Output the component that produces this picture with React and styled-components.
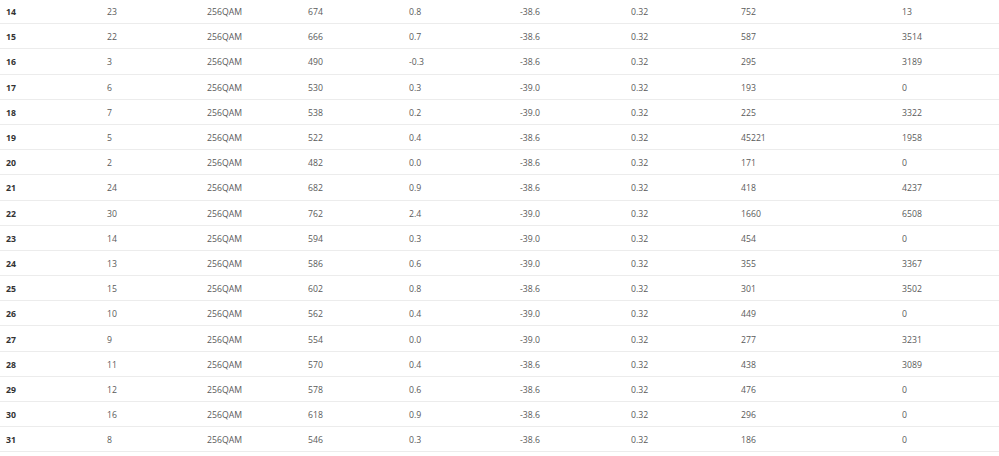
import styled, { createGlobalStyle } from "styled-components";

const rows = [
  [14, 23, "256QAM", 674, "0.8", "-38.6", "0.32", 752, 13],
  [15, 22, "256QAM", 666, "0.7", "-38.6", "0.32", 587, 3514],
  [16, 3, "256QAM", 490, "-0.3", "-38.6", "0.32", 295, 3189],
  [17, 6, "256QAM", 530, "0.3", "-39.0", "0.32", 193, 0],
  [18, 7, "256QAM", 538, "0.2", "-39.0", "0.32", 225, 3322],
  [19, 5, "256QAM", 522, "0.4", "-38.6", "0.32", 45221, 1958],
  [20, 2, "256QAM", 482, "0.0", "-38.6", "0.32", 171, 0],
  [21, 24, "256QAM", 682, "0.9", "-38.6", "0.32", 418, 4237],
  [22, 30, "256QAM", 762, "2.4", "-39.0", "0.32", 1660, 6508],
  [23, 14, "256QAM", 594, "0.3", "-39.0", "0.32", 454, 0],
  [24, 13, "256QAM", 586, "0.6", "-39.0", "0.32", 355, 3367],
  [25, 15, "256QAM", 602, "0.8", "-38.6", "0.32", 301, 3502],
  [26, 10, "256QAM", 562, "0.4", "-39.0", "0.32", 449, 0],
  [27, 9, "256QAM", 554, "0.0", "-39.0", "0.32", 277, 3231],
  [28, 11, "256QAM", 570, "0.4", "-38.6", "0.32", 438, 3089],
  [29, 12, "256QAM", 578, "0.6", "-38.6", "0.32", 476, 0],
  [30, 16, "256QAM", 618, "0.9", "-38.6", "0.32", 296, 0],
  [31, 8, "256QAM", 546, "0.3", "-38.6", "0.32", 186, 0],
];

function App() {
  return (
    <>
      <Global />
      <Table>
        {rows.map((r) => (
          <Row key={r[0]}>
            {r.map((v, i) => (
              <Cell key={i} $head={i === 0}>
                {v}
              </Cell>
            ))}
          </Row>
        ))}
      </Table>
    </>
  );
}

const Global = createGlobalStyle`
  body {
    margin: 0;
    background: #fff;
    font-family: "Open Sans", "Liberation Sans", sans-serif;
  }
`;

const Table = styled.div`
  margin-top: -1px;
  width: 999px;
`;

const Row = styled.div`
  display: grid;
  grid-template-columns: 101px 100px 101px 101px 111px 111px 110px 161px 103px;
  box-sizing: border-box;
  height: 25.2px;
  border-bottom: 1px solid #ececec;
  align-items: center;
`;

const Cell = styled.div`
  padding-left: 6px;
  padding-top: 2px;
  font-size: 8.7px;
  color: ${(p) => (p.$head ? "#333" : "#5a5a5a")};
  font-weight: ${(p) => (p.$head ? 700 : 400)};
  white-space: nowrap;
`;

export default App;
